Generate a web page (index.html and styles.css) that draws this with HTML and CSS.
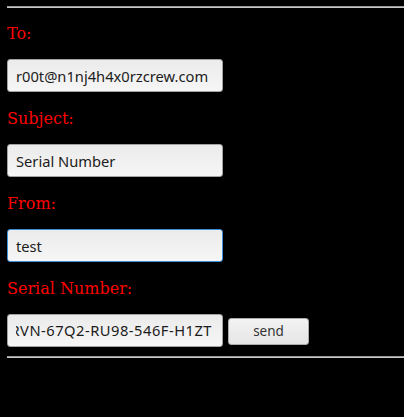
FILE: index.html
```html
<!DOCTYPE html>
<html>
<head>
<meta charset="utf-8">
<link rel="stylesheet" href="styles.css">
</head>
<body>
<hr class="rule rule-top">
<form class="mail-form">
  <div class="field">
    <label class="label">To:</label>
    <input class="box" type="text" value="r00t@n1nj4h4x0rzcrew.com">
  </div>
  <div class="field">
    <label class="label">Subject:</label>
    <input class="box" type="text" value="Serial Number">
  </div>
  <div class="field">
    <label class="label">From:</label>
    <input class="box box-focus" type="text" value="test">
  </div>
  <div class="field">
    <label class="label">Serial Number:</label>
    <div class="row">
      <div class="box box-scroll"><span class="scroll-text">XRVN-67Q2-RU98-546F-H1ZT</span></div>
      <button class="send" type="button">send</button>
    </div>
  </div>
</form>
<hr class="rule rule-bottom">
</body>
</html>
```
FILE: styles.css
```css
html, body {
  background: #000;
}
body {
  margin: 0;
  padding: 6px 0 0 7px;
  height: 411px;
  overflow: hidden;
}
.rule {
  margin: 0;
  height: 0;
  border: none;
  border-top: 1px solid #9a9a9a;
  border-bottom: 1px solid #c8c8c8;
}
.rule-bottom {
  margin-top: 9px;
}
.mail-form {
  display: flex;
  flex-direction: column;
  padding-top: 16px;
}
.field {
  display: flex;
  flex-direction: column;
  align-items: flex-start;
  margin-bottom: 17px;
}
.field:last-child {
  margin-bottom: 0;
}
.label {
  font-family: "DejaVu Serif", serif;
  font-size: 16px;
  line-height: 19px;
  height: 19px;
  color: #ff0000;
  margin-bottom: 16px;
}
.box {
  -webkit-appearance: none;
  appearance: none;
  box-sizing: border-box;
  width: 216px;
  height: 33px;
  margin: 0;
  padding: 0 8px 0 8px;
  border: 1px solid #a3a3a3;
  border-radius: 3px;
  background: linear-gradient(#ebebeb, #f6f6f6);
  font-family: "Noto Sans", sans-serif;
  font-size: 14.7px;
  color: #1c1c1c;
  outline: none;
}
.box-focus {
  border-color: #3c8fd8;
}
.box-scroll {
  display: block;
  padding: 0 10px 0 8px;
}
.scroll-text {
  display: block;
  overflow: hidden;
  direction: rtl;
  text-align: right;
  white-space: nowrap;
  line-height: 31px;
  letter-spacing: 0.5px;
}
.row {
  display: flex;
  align-items: center;
  gap: 5px;
}
.send {
  -webkit-appearance: none;
  appearance: none;
  box-sizing: border-box;
  width: 81px;
  height: 27px;
  margin: 1px 0 0 0;
  padding: 0;
  border: 1px solid #acacac;
  border-radius: 3px;
  background: linear-gradient(#f2f2f2, #e6e6e6);
  font-family: "Noto Sans", sans-serif;
  font-size: 13.5px;
  color: #333;
}
```
